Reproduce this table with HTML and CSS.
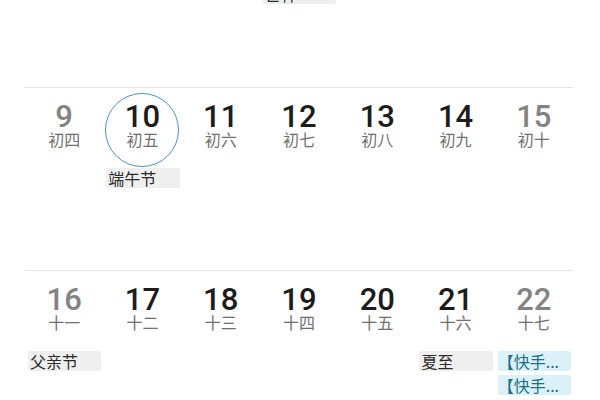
FILE: index.html
```html
<!DOCTYPE html>
<html lang="zh">
<head>
<meta charset="utf-8">
<link rel="stylesheet" href="styles.css">
</head>
<body>
<div class="cal">
  <div class="week">
    <div class="day"><div class="date"></div></div>
    <div class="day"><div class="date"></div></div>
    <div class="day"><div class="date"></div></div>
    <div class="day"><div class="date"></div><div class="chip">芒种</div></div>
    <div class="day"><div class="date"></div></div>
    <div class="day"><div class="date"></div></div>
    <div class="day"><div class="date"></div></div>
  </div>
  <div class="week line">
    <div class="day weekend"><div class="date"><span class="num">9</span><span class="lunar">初四</span></div></div>
    <div class="day"><div class="date today"><span class="num">10</span><span class="lunar">初五</span></div><div class="chip">端午节</div></div>
    <div class="day"><div class="date"><span class="num">11</span><span class="lunar">初六</span></div></div>
    <div class="day"><div class="date"><span class="num">12</span><span class="lunar">初七</span></div></div>
    <div class="day"><div class="date"><span class="num">13</span><span class="lunar">初八</span></div></div>
    <div class="day"><div class="date"><span class="num">14</span><span class="lunar">初九</span></div></div>
    <div class="day weekend"><div class="date"><span class="num">15</span><span class="lunar">初十</span></div></div>
  </div>
  <div class="week line last">
    <div class="day weekend"><div class="date"><span class="num">16</span><span class="lunar">十一</span></div><div class="chip">父亲节</div></div>
    <div class="day"><div class="date"><span class="num">17</span><span class="lunar">十二</span></div></div>
    <div class="day"><div class="date"><span class="num">18</span><span class="lunar">十三</span></div></div>
    <div class="day"><div class="date"><span class="num">19</span><span class="lunar">十四</span></div></div>
    <div class="day"><div class="date"><span class="num">20</span><span class="lunar">十五</span></div></div>
    <div class="day"><div class="date"><span class="num">21</span><span class="lunar">十六</span></div><div class="chip">夏至</div></div>
    <div class="day weekend"><div class="date"><span class="num">22</span><span class="lunar">十七</span></div><div class="chip task">【快手...</div><div class="chip task">【快手...</div></div>
  </div>
</div>
</body>
</html>
```

FILE: styles.css
```css
html, body {
  margin: 0;
  padding: 0;
  background: #ffffff;
  width: 600px;
  height: 400px;
  overflow: hidden;
}
.cal {
  margin-top: -96px;
  padding: 0 27px 0 25px;
  font-family: Roboto, "Noto Sans CJK SC", sans-serif;
}
.week {
  height: 183px;
  display: grid;
  grid-template-columns: repeat(7, 1fr);
  box-sizing: border-box;
}
.week.line {
  border-top: 1px solid #e6e6e6;
}
.week.last {
  height: auto;
}
.day {
  display: flex;
  flex-direction: column;
  align-items: center;
  padding-top: 5px;
}
.date {
  width: 74px;
  height: 74px;
  box-sizing: border-box;
  border-radius: 50%;
  display: flex;
  flex-direction: column;
  align-items: center;
  justify-content: center;
  padding-bottom: 10px;
  color: #1c1c1c;
}
.date.today {
  border: 1.5px solid #4a94c2;
}
.num {
  font-family: Roboto, sans-serif;
  font-size: 31px;
  line-height: 30px;
  font-weight: 500;
}
.lunar {
  font-family: "Noto Sans CJK SC", sans-serif;
  font-size: 16px;
  line-height: 17px;
  margin-top: -1px;
  color: #707070;
}
.weekend .num {
  color: #838383;
}
.chip {
  align-self: stretch;
  margin: 1px 2px 0 3px;
  height: 20px;
  background: #efefef;
  border-radius: 2px;
  font-family: "Noto Sans CJK SC", sans-serif;
  font-size: 16px;
  line-height: 20px;
  color: #2a2a2a;
  padding-left: 2px;
  white-space: nowrap;
}
.chip + .chip {
  margin-top: 4px;
}
.chip.task {
  background: #dcf0f8;
  color: #1f6f86;
  padding-left: 0;
}
```
